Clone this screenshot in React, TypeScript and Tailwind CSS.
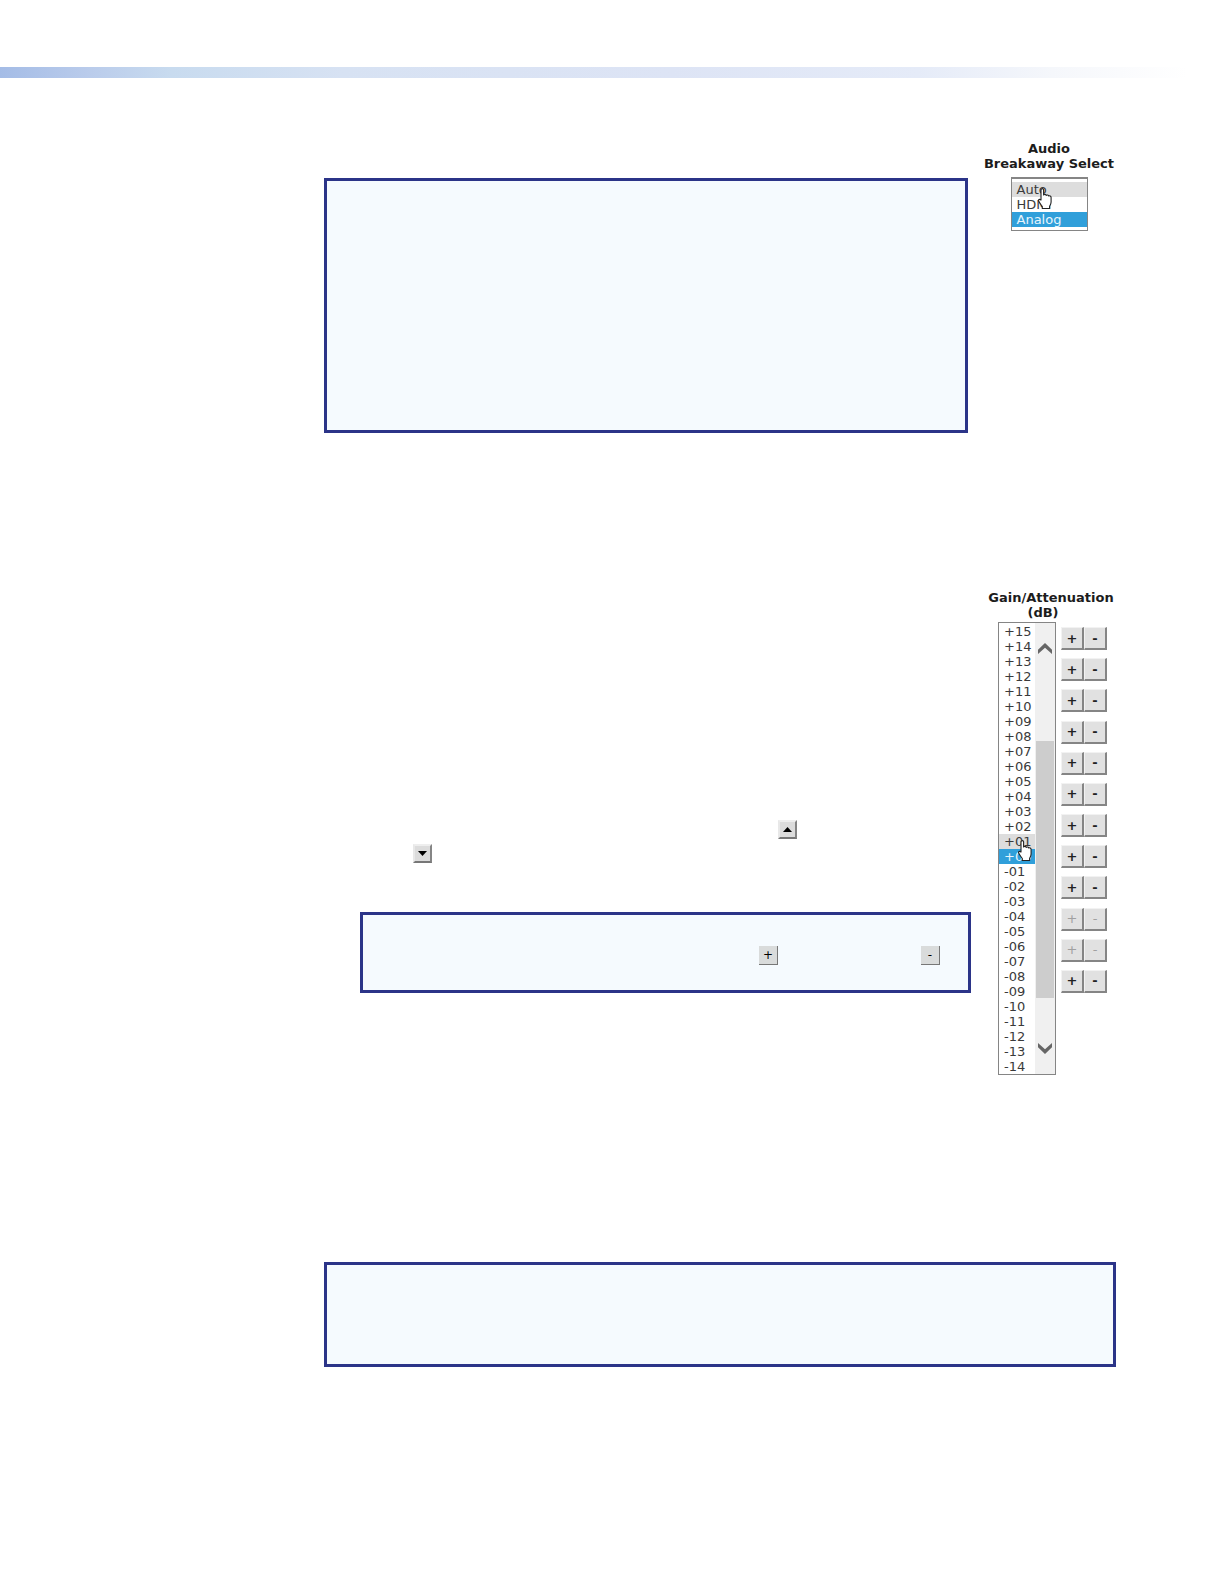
import React from "react";

const pad = (n: number) => String(n).padStart(2, "0");

const GAINS = [
  ...Array.from({ length: 16 }, (_, i) => "+" + pad(15 - i)),
  ...Array.from({ length: 14 }, (_, i) => "-" + pad(i + 1)),
];

const ROWS = Array.from({ length: 12 }, (_, i) => ({ id: i + 1, disabled: i === 9 || i === 10 }));

const selectClass =
  "block appearance-none overflow-hidden bg-white text-[13px] leading-[15px] text-[#3a3a3a] outline-none";

const optionClass =
  "block h-[15px] min-h-0 overflow-hidden px-[5px] py-0 leading-[15px] checked:bg-[linear-gradient(#309fda,#309fda)] checked:[-webkit-text-fill-color:#e8f5fc]";

function Note({ className }: { className: string }) {
  return <div role="note" className={"border-3 border-[#2b3488] bg-[#f5fafe] " + className} />;
}

function HandCursor({ className }: { className: string }) {
  return (
    <svg aria-hidden="true" width="14" height="22" viewBox="0 0 14 22" className={"pointer-events-none absolute " + className}>
      <path
        d="M3 1.8C3 .2 5.6.2 5.6 1.8V7c.6-1 2.3-.8 2.6.4.8-.8 2.2-.4 2.5.6.9-.6 2.4 0 2.4 1.4V14c0 1.8-.8 3-1.5 4.2V20.500H4.300V18.500C3 16.800 1.900 15.200.8 13.200 0 11.700 1.600 10.600 3 12V1.800Z"
        fill="#fff"
        stroke="#222"
        strokeWidth="1.1"
        strokeLinejoin="round"
      />
    </svg>
  );
}

function Chevron({ down = false }: { down?: boolean }) {
  return (
    <svg aria-hidden="true" width="14" height="11" viewBox="0 0 14 11" className={down ? "rotate-180" : ""}>
      <path d="M0 6.800 7 0l7 6.800V11L7 4.800 0 11Z" fill="#666" />
    </svg>
  );
}

function StepButton({ label, name, disabled }: { label: string; name: string; disabled?: boolean }) {
  return (
    <button
      type="button"
      aria-label={name}
      disabled={disabled}
      className="flex h-[23px] w-[23px] items-center justify-center border-t border-l border-r-2 border-b-2 border-t-[#f2f2f2] border-r-[#858585] border-b-[#858585] border-l-[#f2f2f2] bg-[#e1e1e1] text-[13px] leading-[15px] font-bold text-[#222] disabled:font-normal disabled:text-[#a0a0a0]"
    >
      {label}
    </button>
  );
}

function ArrowButton({ down = false }: { down?: boolean }) {
  return (
    <button
      type="button"
      aria-label={down ? "Scroll down" : "Scroll up"}
      className="flex h-[19px] w-[19px] items-center justify-center border-2 border-t-[#eeeeee] border-r-[#858585] border-b-[#777777] border-l-[#e8e8e8] bg-[#dcdcdc]"
    >
      <svg aria-hidden="true" width="9" height="5" viewBox="0 0 9 5" className={down ? "rotate-180" : ""}>
        <path d="M4.500 0 9 5H0Z" fill="#000" />
      </svg>
    </button>
  );
}

function SmallButton({ label, name }: { label: string; name: string }) {
  return (
    <button
      type="button"
      aria-label={name}
      className="flex h-[19px] w-[19px] items-center justify-center border-r border-b border-[#777777] bg-[#d9dbdb] text-[12px] leading-[15px] text-black"
    >
      {label}
    </button>
  );
}

export default function App() {
  return (
    <div className="min-h-screen bg-white pt-[67px] font-['DejaVu_Sans',Verdana,sans-serif]">
      <div className="h-[11px] bg-[linear-gradient(90deg,#a4bce6_0%,#b9cbeb_7%,#c8dbef_14%,#d7e2f3_28%,#dde4f5_55%,#e5ebf8_75%,#f5f7fb_86%,#ffffff_97%)]" />

      <main className="pt-[63px] pr-[108px] pb-[217px] pl-[324px]">
        <section className="flex items-start gap-[14px]">
          <Note className="mt-[37px] h-[255px] flex-1" />
          <div className="flex w-[134px] flex-col items-center">
            <label
              htmlFor="breakaway"
              className="text-center text-[13px] leading-[15px] font-bold whitespace-nowrap text-[#1c1c1c]"
            >
              Audio
              <br />
              Breakaway Select
            </label>
            <div className="relative mt-[6px]">
              <select
                id="breakaway"
                size={3}
                defaultValue="Analog"
                className={selectClass + " h-[54px] w-[77px] border border-t-2 border-[#858585] px-0 pt-[3px] pb-0"}
              >
                <option className={optionClass + " bg-[#dddddd]"}>Auto</option>
                <option className={optionClass}>HDMI</option>
                <option className={optionClass}>Analog</option>
              </select>
              <HandCursor className="top-[11px] left-[27px]" />
            </div>
          </div>
        </section>

        <section className="mt-[157px] flex items-start gap-[11px]">
          <div className="flex-1 pt-[230px]">
            <div className="flex h-6 items-start pl-[454px]">
              <ArrowButton />
            </div>
            <div className="flex items-start pl-[89px]">
              <ArrowButton down />
            </div>
            <div role="note" className="mt-[49px] ml-9 flex h-[81px] items-start justify-end gap-[143px] border-3 border-[#2b3488] bg-[#f5fafe] pt-[31px] pr-7">
              <SmallButton label="+" name="Increase" />
              <SmallButton label="-" name="Decrease" />
            </div>
          </div>
          <div className="w-[134px]">
            <label htmlFor="gain" className="block pl-1 text-center text-[13px] leading-[15px] font-bold text-[#1c1c1c]">
              Gain/Attenuation
              <span className="block pr-4">(dB)</span>
            </label>
            <div className="mt-[2px] flex items-start justify-end gap-[5px] pr-[9px]">
              <div className="relative flex h-[453px] w-[58px] border border-[#858585]">
                <select id="gain" size={30} defaultValue="+00" className={selectClass + " h-[451px] w-9 px-0 pt-px pb-0"}>
                  {GAINS.map((g) => (
                    <option key={g} className={g === "+01" ? optionClass + " bg-[#dddddd]" : optionClass}>
                      {g}
                    </option>
                  ))}
                </select>
                <div aria-hidden="true" className="flex flex-1 flex-col items-center bg-[#f0f0f0] pt-5">
                  <Chevron />
                  <div className="mt-[87px] h-[257px] w-[18px] bg-[#cdcdcd]" />
                  <div className="mt-[45px]">
                    <Chevron down />
                  </div>
                </div>
                <HandCursor className="top-[217px] left-[19px]" />
              </div>
              <div className="mt-[5px] flex h-[366px] flex-col justify-between">
                {ROWS.map((r) => (
                  <div key={r.id} className="flex">
                    <StepButton label="+" name={"Increase gain " + r.id} disabled={r.disabled} />
                    <StepButton label="-" name={"Decrease gain " + r.id} disabled={r.disabled} />
                  </div>
                ))}
              </div>
            </div>
          </div>
        </section>

        <Note className="mt-[187px] h-[105px]" />
      </main>
    </div>
  );
}
